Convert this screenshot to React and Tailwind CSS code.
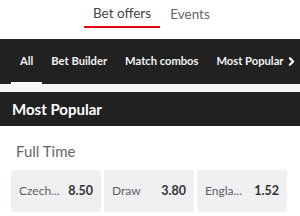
import React from 'react';
import { ChevronRight } from 'lucide-react';

const tabs = ['All', 'Bet Builder', 'Match combos', 'Most Popular'];

const odds = [
  { label: 'Czech...', price: '8.50' },
  { label: 'Draw', price: '3.80' },
  { label: 'Engla...', price: '1.52' },
];

export default function App() {
  return (
    <div className="w-[300px] h-[216px] bg-white overflow-hidden font-['Lato',sans-serif]">
      {/* Top switcher */}
      <div className="h-[39px] flex justify-center items-start pl-[4px]">
        <div className="flex">
          <div className="w-[76px] h-[28px] flex items-center justify-center border-b-2 border-[#e30613] text-[13.5px] text-[#444]">
            Bet offers
          </div>
          <div className="w-[60px] h-[28px] flex items-center justify-center text-[13.5px] text-[#666]">
            Events
          </div>
        </div>
      </div>

      {/* Category nav */}
      <div className="h-[45px] bg-[#212121] flex items-center pl-[11px] relative">
        <div className="flex items-center text-[11.2px] font-bold text-[#f2f2f2] whitespace-nowrap">
          {tabs.map((t, i) => (
            <div key={t} className="relative h-[45px] flex items-center px-[9px]">
              {t}
              {i === 0 && <span className="absolute left-0 right-0 bottom-0 h-[2px] bg-white" />}
            </div>
          ))}
        </div>
        <ChevronRight className="absolute right-[2px] top-[16px] text-white" size={13} strokeWidth={4} />
      </div>

      <div className="h-[8px] bg-[#f7f7f7]" />

      {/* Section header */}
      <div className="h-[34px] bg-[#212121] flex items-center px-[12px]">
        <span className="text-[15px] font-bold text-white">Most Popular</span>
      </div>

      {/* Market */}
      <div className="px-[11px] pt-[13px]">
        <div className="text-[15px] text-[#666] pl-[5px] leading-[24px]">Full Time</div>
        <div className="grid grid-cols-3 gap-[3px] mt-[7px] w-[276px]">
          {odds.map(o => (
            <div key={o.label} className="h-[42px] bg-[#eff0f2] rounded-[2px] flex items-center justify-between pl-[8px] pr-[8px]">
              <span className="text-[12px] text-[#5f5f5f]">{o.label}</span>
              <span className="text-[12.5px] font-bold text-[#333]">{o.price}</span>
            </div>
          ))}
        </div>
      </div>
    </div>
  );
}
